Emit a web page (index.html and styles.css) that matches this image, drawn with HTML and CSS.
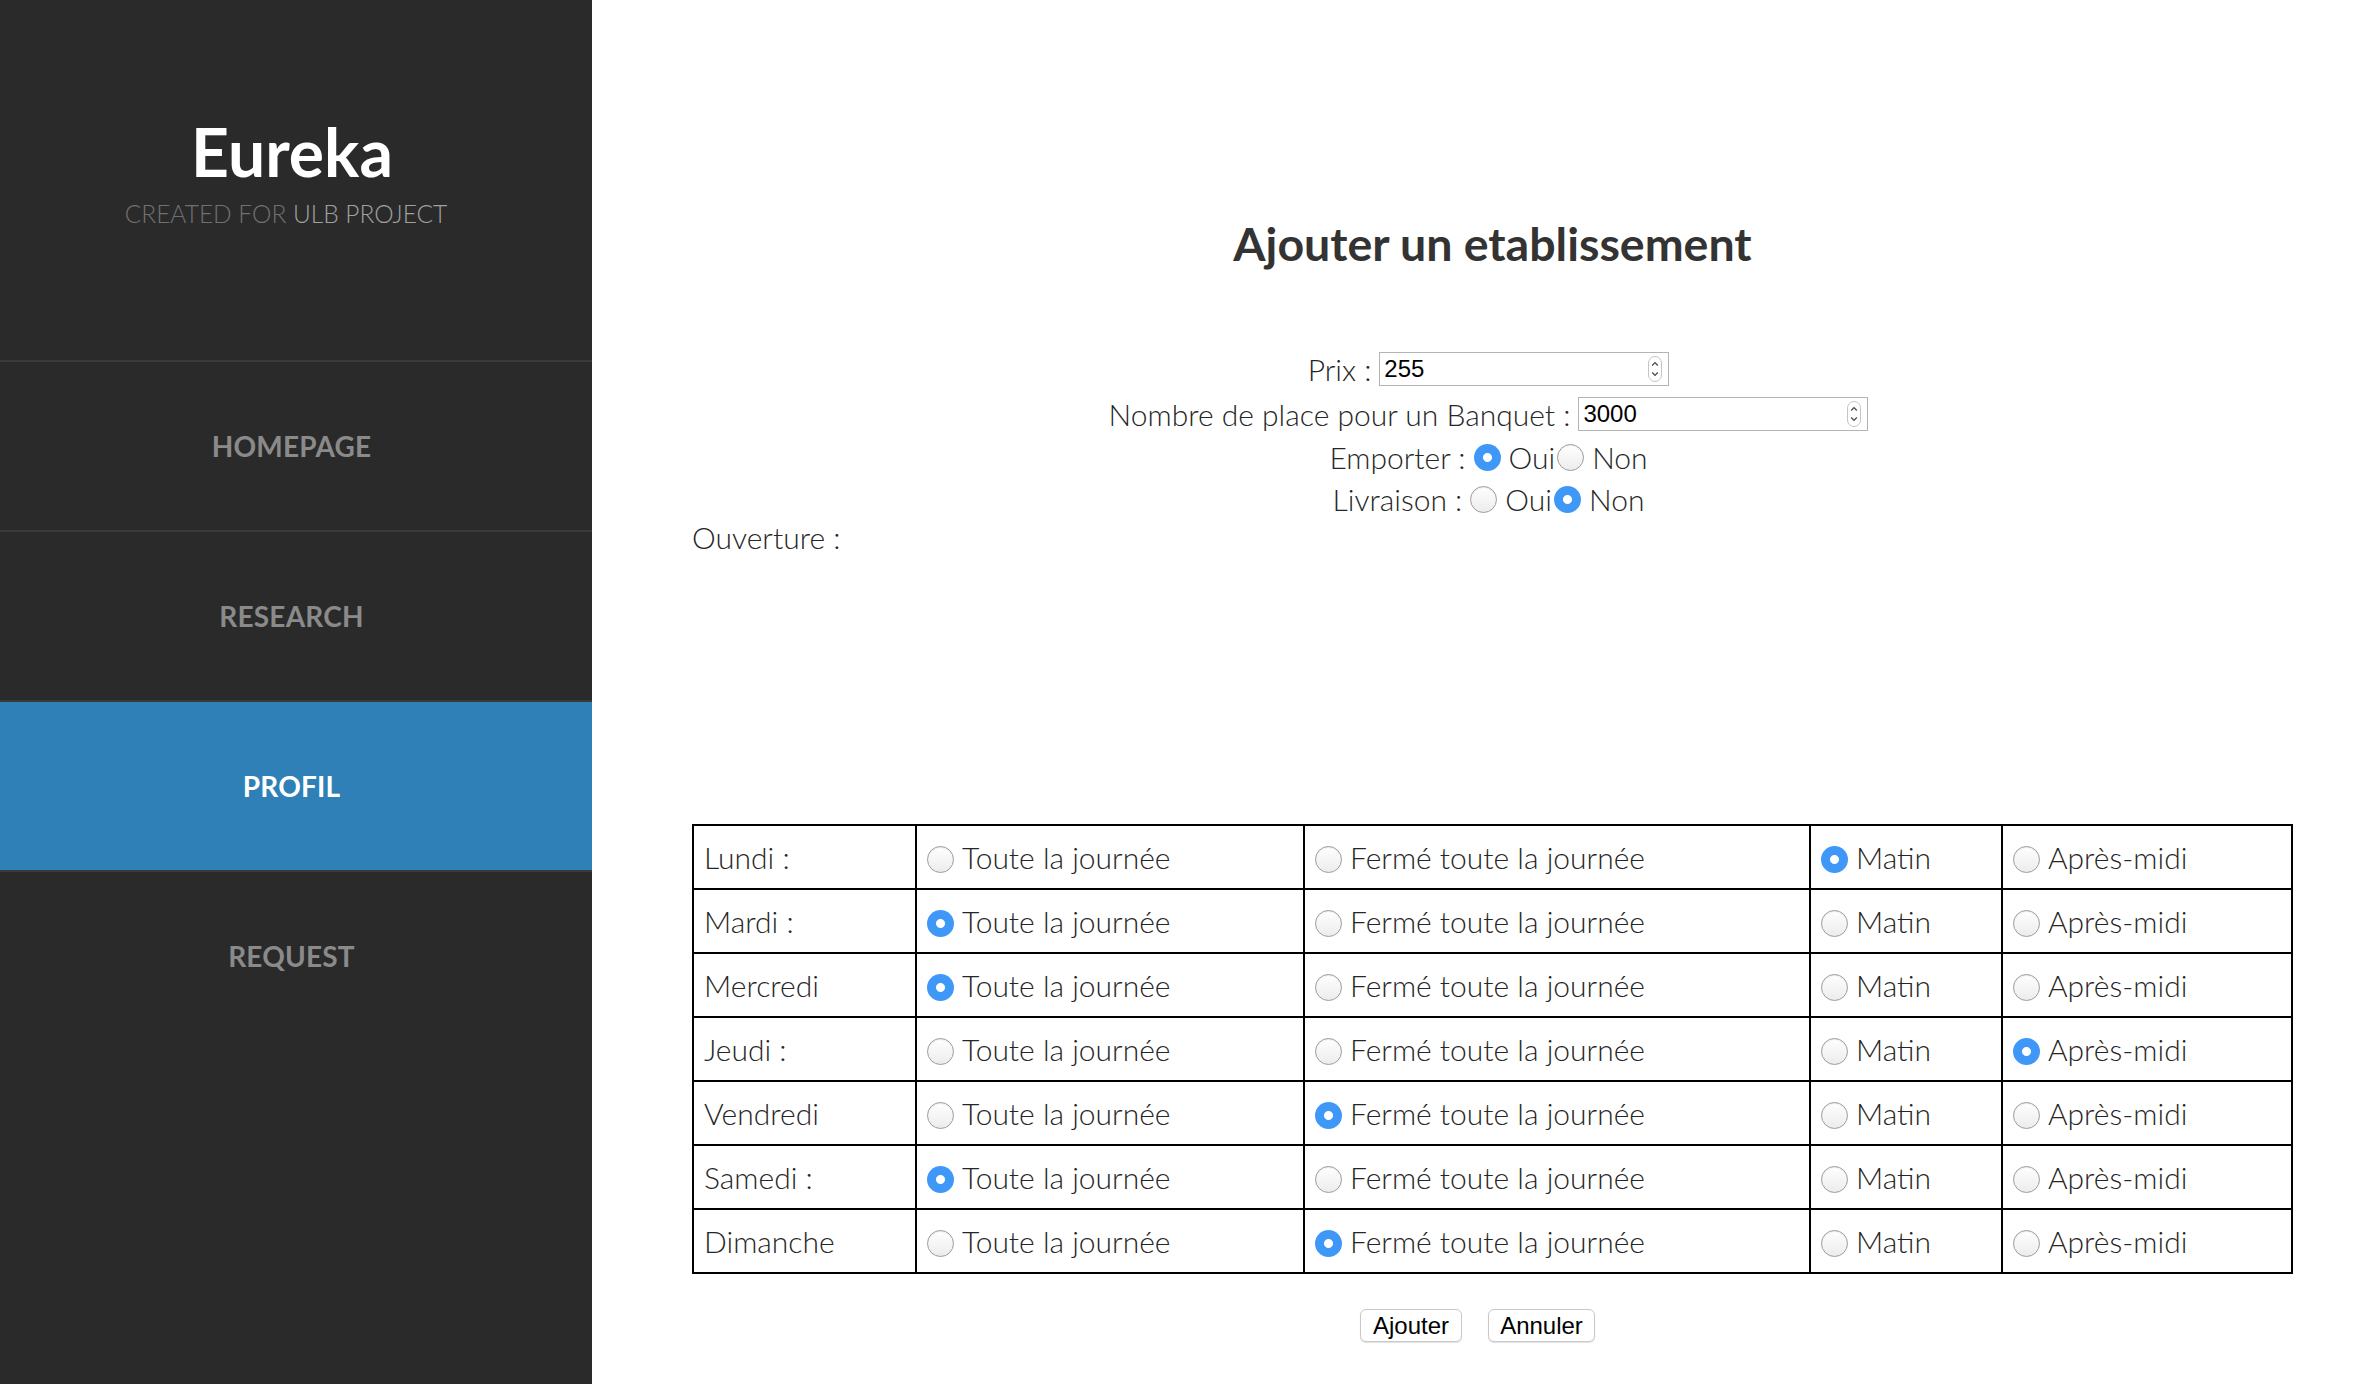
FILE: index.html
```html
<!DOCTYPE html>
<html lang="fr">
<head>
<meta charset="utf-8">
<title>Eureka - Ajouter un etablissement</title>
<link rel="stylesheet" href="styles.css">
</head>
<body>
<div class="layout">
  <aside class="sidebar">
    <header class="brand">
      <div class="brand-name">Eureka</div>
      <div class="brand-sub"><span class="dim">CREATED FOR</span> ULB PROJECT</div>
    </header>
    <nav class="nav">
      <a class="nav-item">HOMEPAGE</a>
      <a class="nav-item">RESEARCH</a>
      <a class="nav-item active">PROFIL</a>
      <a class="nav-item">REQUEST</a>
    </nav>
  </aside>
  <main class="main">
    <h1 class="title">Ajouter un etablissement</h1>
    <form class="form">
      <div class="row row-input">
        <label>Prix :</label>
        <div class="numbox">
          <input class="num" type="text" value="255">
          <svg class="spin" viewBox="0 0 14 26" width="14" height="26"><rect x="0.5" y="0.5" width="13" height="25" rx="6.5" fill="#fff" stroke="#c4c4c4"/><path d="M4.2 9.5 L7 6.6 L9.8 9.5" fill="none" stroke="#444" stroke-width="1.2"/><path d="M4.2 16.5 L7 19.4 L9.8 16.5" fill="none" stroke="#444" stroke-width="1.2"/></svg>
        </div>
      </div>
      <div class="row row-input">
        <label>Nombre de place pour un Banquet :</label>
        <div class="numbox">
          <input class="num" type="text" value="3000">
          <svg class="spin" viewBox="0 0 14 26" width="14" height="26"><rect x="0.5" y="0.5" width="13" height="25" rx="6.5" fill="#fff" stroke="#c4c4c4"/><path d="M4.2 9.5 L7 6.6 L9.8 9.5" fill="none" stroke="#444" stroke-width="1.2"/><path d="M4.2 16.5 L7 19.4 L9.8 16.5" fill="none" stroke="#444" stroke-width="1.2"/></svg>
        </div>
      </div>
      <div class="row row-radio">
        <span>Emporter :</span>
        <input class="radio" type="radio" name="emp" checked><span class="opt">Oui</span><input class="radio" type="radio" name="emp"><span class="opt">Non</span>
      </div>
      <div class="row row-radio">
        <span>Livraison :</span>
        <input class="radio" type="radio" name="liv"><span class="opt">Oui</span><input class="radio" type="radio" name="liv" checked><span class="opt">Non</span>
      </div>
      <div class="ouverture">Ouverture :</div>
      <table class="hours">
        <colgroup>
          <col class="c1"><col class="c2"><col class="c3"><col class="c4"><col class="c5">
        </colgroup>
        <tbody>
          <tr><td>Lundi :</td><td><input class="radio" type="radio" name="d1">Toute la journée</td><td><input class="radio" type="radio" name="d1">Fermé toute la journée</td><td><input class="radio" type="radio" name="d1" checked>Matin</td><td><input class="radio" type="radio" name="d1">Après-midi</td></tr>
          <tr><td>Mardi :</td><td><input class="radio" type="radio" name="d2" checked>Toute la journée</td><td><input class="radio" type="radio" name="d2">Fermé toute la journée</td><td><input class="radio" type="radio" name="d2">Matin</td><td><input class="radio" type="radio" name="d2">Après-midi</td></tr>
          <tr><td>Mercredi</td><td><input class="radio" type="radio" name="d3" checked>Toute la journée</td><td><input class="radio" type="radio" name="d3">Fermé toute la journée</td><td><input class="radio" type="radio" name="d3">Matin</td><td><input class="radio" type="radio" name="d3">Après-midi</td></tr>
          <tr><td>Jeudi :</td><td><input class="radio" type="radio" name="d4">Toute la journée</td><td><input class="radio" type="radio" name="d4">Fermé toute la journée</td><td><input class="radio" type="radio" name="d4">Matin</td><td><input class="radio" type="radio" name="d4" checked>Après-midi</td></tr>
          <tr><td>Vendredi</td><td><input class="radio" type="radio" name="d5">Toute la journée</td><td><input class="radio" type="radio" name="d5" checked>Fermé toute la journée</td><td><input class="radio" type="radio" name="d5">Matin</td><td><input class="radio" type="radio" name="d5">Après-midi</td></tr>
          <tr><td>Samedi :</td><td><input class="radio" type="radio" name="d6" checked>Toute la journée</td><td><input class="radio" type="radio" name="d6">Fermé toute la journée</td><td><input class="radio" type="radio" name="d6">Matin</td><td><input class="radio" type="radio" name="d6">Après-midi</td></tr>
          <tr><td>Dimanche</td><td><input class="radio" type="radio" name="d7">Toute la journée</td><td><input class="radio" type="radio" name="d7" checked>Fermé toute la journée</td><td><input class="radio" type="radio" name="d7">Matin</td><td><input class="radio" type="radio" name="d7">Après-midi</td></tr>
        </tbody>
      </table>
      <div class="actions">
        <button type="button" class="btn btn-add">Ajouter</button>
        <button type="button" class="btn btn-cancel">Annuler</button>
      </div>
    </form>
  </main>
</div>
</body>
</html>
```

FILE: styles.css
```css
html, body {
  margin: 0;
  padding: 0;
  height: 100%;
  background: #fff;
}

body {
  font-family: "Lato", "Liberation Sans", sans-serif;
  color: #333;
}

.layout {
  display: flex;
  width: 2376px;
  height: 1384px;
  overflow: hidden;
}

/* ---------- sidebar ---------- */
.sidebar {
  width: 592px;
  flex: 0 0 592px;
  background: #2a2a2a;
  display: flex;
  flex-direction: column;
}

.brand {
  height: 360px;
  box-sizing: border-box;
  padding-top: 112px;
  padding-right: 8px;
  text-align: center;
}

.brand-name {
  font-family: "Lato", sans-serif;
  font-weight: 700;
  font-size: 66px;
  line-height: 80px;
  color: #fff;
}

.brand-sub {
  margin-top: 7px;
  padding-right: 12px;
  font-weight: 300;
  font-size: 24.5px;
  line-height: 30px;
  color: #a0a0a0;
}

.brand-sub .dim {
  color: #707070;
}

.nav {
  display: flex;
  flex-direction: column;
}

.nav-item {
  display: flex;
  align-items: center;
  justify-content: center;
  height: 168px;
  padding-right: 9px;
  border-top: 2px solid #3a3a3a;
  font-weight: 700;
  font-size: 28px;
  color: #8a8a8a;
  letter-spacing: 0.2px;
}

.nav-item.active {
  background: #3080b8;
  color: #fff;
}

/* ---------- main ---------- */
.main {
  flex: 1;
  box-sizing: border-box;
  padding: 0 85px 0 100px;
}

.title {
  margin: 213px 0 0 0;
  text-align: center;
  font-weight: 700;
  font-size: 46.5px;
  line-height: 60px;
  color: #333;
}

.form {
  margin-top: 73px;
  font-weight: 300;
  font-size: 30px;
  color: #262626;
}

.row {
  display: flex;
  justify-content: center;
  align-items: center;
  padding-right: 8px;
}

.row-input {
  height: 45px;
}

.row-radio {
  height: 42px;
}

.row label {
  margin-right: 8px;
}

.numbox {
  display: flex;
  align-items: center;
  width: 290px;
  height: 34px;
  box-sizing: border-box;
  border: 1px solid #b3b3b3;
  background: #fff;
  padding: 0 6px 0 4px;
}

.num {
  flex: 1;
  min-width: 0;
  border: none;
  outline: none;
  padding: 0;
  font-family: "Liberation Sans", Arial, sans-serif;
  font-size: 24px;
  color: #000;
  background: transparent;
}

.spin {
  flex: 0 0 auto;
}

.radio {
  appearance: none;
  -webkit-appearance: none;
  width: 27px;
  height: 27px;
  margin: 0 8px 0 8px;
  border-radius: 50%;
  box-sizing: border-box;
  border: 1px solid #9c9c9c;
  background: linear-gradient(#ffffff, #ececec);
  box-shadow: inset 0 1px 1px rgba(0, 0, 0, 0.08);
  flex: 0 0 auto;
  vertical-align: middle;
}

.radio:checked {
  border: none;
  background: radial-gradient(circle, #ffffff 0 4px, #3f98f8 5px);
  box-shadow: none;
}

.row-radio .opt + .radio {
  margin-left: 2px;
}

.ouverture {
  text-align: left;
  height: 34px;
  line-height: 34px;
}

/* ---------- table ---------- */
.hours {
  margin-top: 270px;
  width: 1599px;
  table-layout: fixed;
  border-collapse: collapse;
  border: 2px solid #000;
}

.hours col.c1 { width: 223px; }
.hours col.c2 { width: 388px; }
.hours col.c3 { width: 506px; }
.hours col.c4 { width: 192px; }
.hours col.c5 { width: 290px; }

.hours td {
  height: 64px;
  box-sizing: border-box;
  border: 2px solid #000;
  padding: 0 10px;
  vertical-align: middle;
  white-space: nowrap;
}

.hours td .radio {
  margin: 0 8px 0 0;
  position: relative;
  top: -2px;
}

/* ---------- actions ---------- */
.actions {
  display: flex;
  justify-content: center;
  gap: 26px;
  margin-top: 35px;
  padding-right: 30px;
}

.btn {
  height: 33px;
  box-sizing: border-box;
  border: 1px solid #c9c9c9;
  border-radius: 6px;
  background: #fff;
  box-shadow: 0 1px 1px rgba(0, 0, 0, 0.12);
  font-family: "Liberation Sans", Arial, sans-serif;
  font-size: 24px;
  color: #000;
  padding: 0;
}

.btn-add { width: 102px; }
.btn-cancel { width: 107px; }
```
